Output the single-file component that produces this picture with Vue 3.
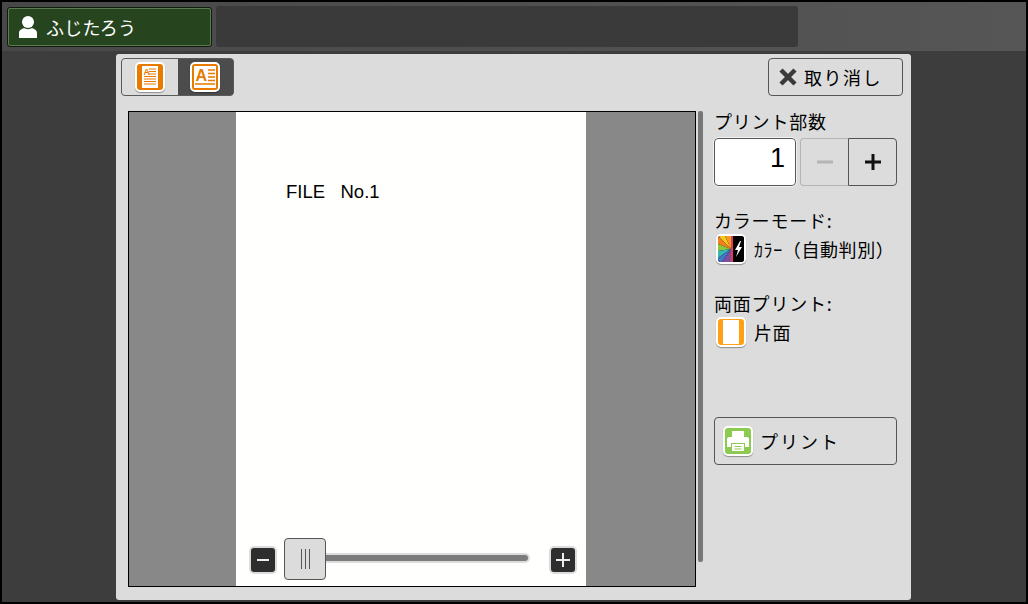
<script setup>
const copies = 1;
</script>

<template>
  <div class="screen">
    <header class="topbar">
      <button class="user">
        <svg class="user-icon" width="20" height="24" viewBox="0 0 20 24">
          <circle cx="10" cy="7" r="6" fill="#fff" />
          <path d="M1 23v-5c0-3 3-4 5-5 2 1.500 6 1.500 8 0 2 1 5 2 5 5v5z" fill="#fff" />
        </svg>
        <span>ふじたろう</span>
      </button>
      <div class="message"></div>
    </header>

    <main class="stage">
      <section class="dialog">
        <div class="toolbar">
          <div class="segments">
            <button class="seg seg-on">
              <span class="tile tile-orange">
                <svg width="24" height="24" viewBox="0 0 24 24">
                  <rect x="4" y="1" width="16" height="22" fill="#fff" />
                  <text x="5.500" y="9.500" class="tile-letter small">A</text>
                  <path d="M11 4h7M11 6.500h7M11 9h7M6 11.500h12M6 14h12M6 16.500h12M6 19h12" stroke="#e87a00" stroke-width="1.200" />
                </svg>
              </span>
            </button>
            <button class="seg seg-off">
              <span class="tile tile-orange">
                <svg width="24" height="24" viewBox="0 0 24 24">
                  <rect x="1" y="1" width="22" height="22" fill="#fff" />
                  <text x="2.500" y="16" class="tile-letter">A</text>
                  <path d="M15 5h7M15 8.500h7M15 12h7M15 15.500h7M2 19h20" stroke="#e87a00" stroke-width="1.500" />
                </svg>
              </span>
            </button>
          </div>
          <button class="cancel">
            <svg width="20" height="20" viewBox="0 0 20 20">
              <path d="M3 3l14 14M17 3L3 17" stroke="#3a3a3a" stroke-width="4.500" />
            </svg>
            <span>取り消し</span>
          </button>
        </div>

        <div class="content">
          <div class="preview">
            <div class="page">
              <p class="file-name">FILE&nbsp;&nbsp;&nbsp;No.1</p>
            </div>
            <div class="zoom">
              <button class="zoom-btn">
                <svg width="16" height="16" viewBox="0 0 16 16"><path d="M2 8h12" stroke="#eee" stroke-width="2" /></svg>
              </button>
              <div class="track">
                <div class="rail"></div>
                <div class="thumb"><i></i><i></i><i></i></div>
              </div>
              <button class="zoom-btn">
                <svg width="16" height="16" viewBox="0 0 16 16"><path d="M1 8h14M8 1v14" stroke="#eee" stroke-width="2" /></svg>
              </button>
            </div>
          </div>
          <div class="scrollbar"></div>

          <aside class="side">
            <div class="label first">プリント部数</div>
            <div class="copies">
              <div class="count">{{ copies }}</div>
              <div class="stepper">
                <button class="step step-off">
                  <svg width="18" height="18" viewBox="0 0 18 18"><path d="M1 9h16" stroke="#b4b4b4" stroke-width="3" /></svg>
                </button>
                <button class="step">
                  <svg width="18" height="18" viewBox="0 0 18 18"><path d="M1 9h16M9 1v16" stroke="#111" stroke-width="3" /></svg>
                </button>
              </div>
            </div>

            <div class="label mode">カラーモード:</div>
            <div class="value">
              <span class="tile tile-color">
                <svg width="26" height="26" viewBox="0 0 26 26">
                  <rect width="26" height="26" fill="#000" />
                  <path d="M13 13L0 0h7z" fill="#f6c91a" />
                  <path d="M13 13L7 0h6z" fill="#f0a020" />
                  <path d="M13 13L0 0v8z" fill="#f57f20" />
                  <path d="M13 13L0 8v7z" fill="#8cc63f" />
                  <path d="M13 13L0 15v7z" fill="#35b8b0" />
                  <path d="M13 13L0 22v4h4z" fill="#3f78c4" />
                  <path d="M13 13L4 26h9z" fill="#7b4fa0" />
                  <rect x="13" y="0" width="2" height="26" fill="#e8365d" />
                  <path d="M22 5l-5 9h3l-2 7 6-10h-3l2-6z" fill="#fff" />
                </svg>
              </span>
              <span>ｶﾗｰ（自動判別）</span>
            </div>

            <div class="label duplex">両面プリント:</div>
            <div class="value">
              <span class="tile tile-amber">
                <span class="sheet"></span>
              </span>
              <span>片面</span>
            </div>

            <button class="print">
              <span class="tile tile-green">
                <svg width="24" height="24" viewBox="0 0 24 24">
                  <path d="M6 2h12v6H6zM1 10c0-1 1-2 2-2h18c1 0 2 1 2 2v8h-4v-4H5v4H1z" fill="#fff" />
                  <path d="M6 15h12v7H6z" fill="#fff" />
                  <path d="M8.500 17.500h7M8.500 20h7" stroke="#8ccb50" stroke-width="1.200" />
                </svg>
              </span>
              <span>プリント</span>
            </button>
          </aside>
        </div>
      </section>
    </main>
  </div>
</template>

<style>
html,
body {
  margin: 0;
  background: #000;
}
</style>

<style scoped>
.screen {
  width: 1024px;
  height: 600px;
  padding: 2px;
  background: #000;
  display: flex;
  flex-direction: column;
  font-family: "Noto Sans CJK JP", "Liberation Sans", sans-serif;
  color: #000;
}
button {
  font-family: inherit;
  padding: 0;
  cursor: pointer;
}

.topbar {
  height: 49px;
  flex: none;
  box-sizing: border-box;
  padding: 4px 0 0 5px;
  display: flex;
  gap: 4px;
  background: linear-gradient(90deg, #484848, #565656);
}
.user {
  width: 205px;
  height: 40px;
  margin-top: 1px;
  box-sizing: border-box;
  display: flex;
  align-items: center;
  gap: 8px;
  padding-left: 10px;
  background: #26451f;
  border: 1px solid #101c0d;
  outline: 1px solid #5d7a52;
  outline-offset: -2px;
  border-radius: 3px;
  color: #fff;
  font-size: 18px;
  letter-spacing: 0.3px;
}
.message {
  width: 582px;
  height: 41px;
  background: #3a3a3a;
  border-radius: 3px;
}

.stage {
  flex: 1;
  min-height: 0;
  background: #3d3d3d;
  padding: 3px 0 2px 114px;
}
.dialog {
  width: 795px;
  height: 100%;
  box-sizing: border-box;
  background: #dcdcdc;
  border-radius: 3px;
  padding: 4px 8px 0 5px;
  display: flex;
  flex-direction: column;
}

.toolbar {
  height: 38px;
  flex: none;
  display: flex;
  justify-content: space-between;
}
.segments {
  width: 113px;
  height: 38px;
  box-sizing: border-box;
  display: flex;
  background: #4c4c4c;
  border: 1px solid #5a5a5a;
  border-radius: 4px;
  overflow: hidden;
}
.seg {
  width: 56px;
  border: 0;
  display: flex;
  align-items: center;
  justify-content: center;
}
.seg-on {
  background: #dcdcdc;
}
.seg-off {
  background: #4c4c4c;
}

.tile {
  width: 30px;
  height: 30px;
  box-sizing: border-box;
  flex: none;
  border: 2px solid #fff;
  border-radius: 5px;
  display: flex;
  align-items: center;
  justify-content: center;
  overflow: hidden;
  box-shadow: 0 1px 1px rgba(0, 0, 0, 0.35);
}
.tile-orange {
  background: #e87a00;
}
.tile-color {
  background: #000;
}
.tile-amber {
  background: #ffa114;
}
.tile-green {
  background: #8ccb50;
}
.tile-letter {
  font-family: "Liberation Sans", sans-serif;
  font-size: 16px;
  font-weight: 700;
  fill: #e87a00;
}
.tile-letter.small {
  font-size: 9px;
}
.sheet {
  width: 16px;
  height: 24px;
  background: #fff;
}

.cancel {
  width: 135px;
  height: 38px;
  box-sizing: border-box;
  display: flex;
  align-items: center;
  gap: 6px;
  padding-left: 9px;
  background: #dcdcdc;
  border: 1px solid #555;
  border-radius: 4px;
  font-size: 18px;
  letter-spacing: 1.500px;
  color: #000;
}

.content {
  margin-top: 15px;
  margin-left: 7px;
  flex: 1;
  display: flex;
  align-items: flex-start;
}
.preview {
  width: 568px;
  height: 476px;
  box-sizing: border-box;
  position: relative;
  flex: none;
  background: #888;
  border: 1px solid #000;
  display: flex;
  justify-content: center;
}
.page {
  width: 350px;
  height: 100%;
  background: #fffffd;
  margin-left: -2px;
}
.file-name {
  margin: 69px 0 0 50px;
  font-family: "Liberation Sans", sans-serif;
  font-size: 18.500px;
  line-height: 22px;
}

.zoom {
  position: absolute;
  left: 120px;
  top: 426px;
  width: 328px;
  height: 42px;
  display: flex;
  align-items: center;
  gap: 7px;
}
.zoom-btn {
  width: 28px;
  height: 28px;
  box-sizing: border-box;
  flex: none;
  margin-top: 2px;
  display: flex;
  align-items: center;
  justify-content: center;
  background: #2e2e2e;
  border: 2px solid #dcdcdc;
  border-radius: 5px;
}
.track {
  flex: 1;
  height: 42px;
  position: relative;
  margin: 0 12px 0 0;
}
.rail {
  position: absolute;
  left: 0;
  right: 0;
  top: 15px;
  height: 10px;
  box-sizing: border-box;
  background: #7c7c7c;
  border: 2px solid #dcdcdc;
  border-radius: 5px;
}
.thumb {
  position: absolute;
  left: 0;
  top: 0;
  width: 42px;
  height: 42px;
  box-sizing: border-box;
  background: #dcdcdc;
  border: 1px solid #555;
  border-radius: 4px;
  display: flex;
  align-items: center;
  justify-content: center;
  gap: 3px;
}
.thumb i {
  width: 1px;
  height: 20px;
  background: #555;
}

.scrollbar {
  width: 5px;
  height: 451px;
  margin-left: 2px;
  flex: none;
  background: #777;
  border-radius: 2px;
}

.side {
  width: 183px;
  margin-left: 11px;
  flex: none;
  display: flex;
  flex-direction: column;
}
.label {
  font-size: 18px;
  line-height: 20px;
  letter-spacing: 0.800px;
}
.label.first {
  margin-top: 0;
}
.copies {
  margin-top: 7px;
  display: flex;
  justify-content: space-between;
}
.count {
  width: 82px;
  height: 48px;
  box-sizing: border-box;
  background: #fff;
  border: 1px solid #555;
  outline: 1px solid #f2f2f2;
  outline-offset: 0;
  border-radius: 4px;
  text-align: right;
  padding-right: 10px;
  font-family: "Liberation Sans", sans-serif;
  font-size: 27px;
  line-height: 38px;
}
.stepper {
  width: 97px;
  height: 48px;
  display: flex;
}
.step {
  width: 49px;
  height: 48px;
  box-sizing: border-box;
  display: flex;
  align-items: center;
  justify-content: center;
  background: #dcdcdc;
  border: 1px solid #555;
  border-radius: 0 4px 4px 0;
}
.step-off {
  width: 48px;
  border-color: #b4b4b4;
  border-right: 0;
  border-radius: 4px 0 0 4px;
}

.mode {
  margin-top: 24px;
}
.duplex {
  margin-top: 29px;
}
.value {
  margin-top: 4px;
  margin-left: 2px;
  display: flex;
  align-items: center;
  gap: 8px;
  font-size: 18px;
  line-height: 30px;
  letter-spacing: 0.600px;
}

.print {
  margin-top: 70px;
  width: 183px;
  height: 48px;
  box-sizing: border-box;
  display: flex;
  align-items: center;
  gap: 7px;
  padding-left: 8px;
  background: #dcdcdc;
  border: 1px solid #555;
  border-radius: 4px;
  font-size: 18px;
  letter-spacing: 2px;
  color: #000;
}
</style>
